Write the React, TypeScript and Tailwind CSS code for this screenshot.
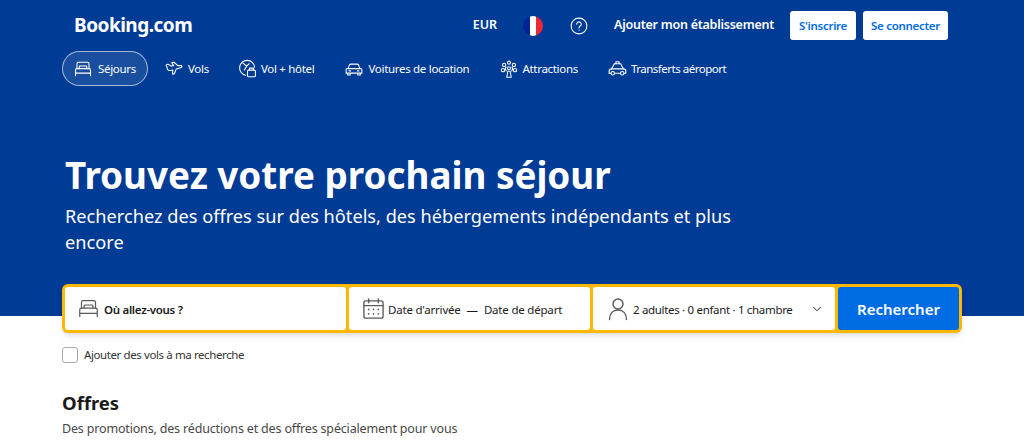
import type { ReactNode } from 'react'
import { ChevronDown } from 'lucide-react'

const FONT = "font-['Noto_Sans','Open_Sans',sans-serif]"

function Ico({ children, className = 'w-[18px] h-[18px]' }: { children: ReactNode; className?: string }) {
  return (
    <svg viewBox="0 0 24 24" fill="none" stroke="currentColor" strokeWidth="1.4" strokeLinecap="round" strokeLinejoin="round" className={`shrink-0 ${className}`}>
      {children}
    </svg>
  )
}

const Bed = ({ className }: { className?: string }) => (
  <Ico className={className}>
    <path d="M2 21v-3.500M22 21v-3.500M2 17.500h20v-4a2 2 0 0 0-2-2H4a2 2 0 0 0-2 2v4Z" />
    <path d="M4 11.500V5a2 2 0 0 1 2-2h12a2 2 0 0 1 2 2v6.500" />
    <path d="M7 11.500V9a1 1 0 0 1 1-1h8a1 1 0 0 1 1 1v2.500" />
  </Ico>
)

const Plane = () => (
  <Ico>
    <path d="M1.500 6.500 4 5.500l4 2.500 3.500-.5L9 3.500l3-.5 5 4.500 3.500-.3c1.500-.1 2.500.8 2 1.800-.4.8-1.500 1.300-3 1.700l-4.500 1.200-2.500 6.500-2.500.5.500-5.500-3.500.5c-1.500.2-3-.3-3.500-1.200L1.500 6.500Z" />
  </Ico>
)

const PlaneHotel = () => (
  <Ico className="w-[19px] h-[19px]">
    <path d="M9.500 20.500A9.500 9.500 0 1 1 21 10.500" />
    <path d="M6 5l5 4-3 5M11 9l3-3" />
    <rect x="12" y="14" width="10" height="8.500" rx="1.500" />
    <path d="M14.500 14v-2.500h5V14" />
  </Ico>
)

const Car = () => (
  <Ico>
    <path d="M4 11.500 6 6.500A2 2 0 0 1 7.800 5.500h8.400a2 2 0 0 1 1.800 1l2 5" />
    <path d="M3 11.500h18a1.500 1.500 0 0 1 1.500 1.500v4.500h-21V13A1.500 1.500 0 0 1 3 11.500ZM3.500 17.500V20h3.500v-2.500M17 17.500V20h3.500v-2.500" />
    <path d="M5.500 14.500h2M16.500 14.500h2" />
  </Ico>
)

const Wheel = () => (
  <Ico>
    <circle cx="12" cy="11" r="2" />
    <path d="M9 23l1.500-8h3L15 23ZM8 9.500c-1 1.500-1 3.500.5 5M16 9.500c1 1.500 1 3.500-.5 5" />
    <circle cx="12" cy="3.500" r="2" />
    <circle cx="5.500" cy="6.500" r="2.200" />
    <circle cx="18.500" cy="6.500" r="2.200" />
    <circle cx="4" cy="13.500" r="2.200" />
    <circle cx="20" cy="13.500" r="2.200" />
  </Ico>
)

const Taxi = () => (
  <Ico className="w-[19px] h-[19px]">
    <path d="M10 6V3.500h4V6" />
    <path d="M1.500 18v-3c0-1.500 1.500-2.500 3-2.500L8 6h8l3.500 6.500c1.500 0 3 1 3 2.500v3h-2" />
    <path d="M4.500 12.500h15M8.500 18h7M1.500 18h2" />
    <circle cx="6" cy="18" r="2.200" />
    <circle cx="18" cy="18" r="2.200" />
  </Ico>
)

const Calendar = () => (
  <Ico className="w-[23px] h-[23px]">
    <rect x="2" y="4" width="20" height="18" rx="2" />
    <path d="M2 9h20M7 2v4M17 2v4" />
    <path d="M7 13h.01M12 13h.01M17 13h.01M7 17.500h.01M12 17.500h.01M17 17.500h.01" strokeWidth="1.800" />
  </Ico>
)

const Person = () => (
  <Ico className="w-[24px] h-[24px]">
    <circle cx="12" cy="7" r="5" />
    <path d="M3.500 22.500c0-6 3.500-9.500 8.500-9.500s8.500 3.500 8.500 9.500" />
  </Ico>
)

const Help = () => (
  <Ico className="w-[18px] h-[18px]">
    <circle cx="12" cy="12" r="10.500" />
    <path d="M9 9.500a3 3 0 1 1 4.500 2.600c-1 .6-1.500 1.200-1.500 2.400M12 17.500h.01" />
  </Ico>
)

const navItems = [
  { label: 'Vols', icon: <Plane />, cls: 'ml-[17px] gap-[5px]' },
  { label: 'Vol + hôtel', icon: <PlaneHotel />, cls: 'ml-[29px] gap-[4px]' },
  { label: 'Voitures de location', icon: <Car />, cls: 'ml-[31px] gap-[5px]' },
  { label: 'Attractions', icon: <Wheel />, cls: 'ml-[31px] gap-[4px]' },
  { label: 'Transferts aéroport', icon: <Taxi />, cls: 'ml-[30px] gap-[4px] tracking-[-0.5px]' },
]

export default function App() {
  return (
    <div className={`${FONT} h-[442px] overflow-hidden bg-white text-[#1a1a1a]`}>
      <div className="h-[316px] bg-[#003b95] text-white">
        <div className="flex h-[51px] items-center pr-[76px] pl-[74px]">
          <span className="text-[19px] font-bold tracking-[-0.5px]">Booking.com</span>
          <span className="ml-auto text-[12.500px] font-semibold">EUR</span>
          <span className="ml-[26px] flex h-5 w-5 overflow-hidden rounded-full">
            <span className="flex-1 bg-[#002395]" />
            <span className="flex-1 bg-white" />
            <span className="flex-1 bg-[#ed2939]" />
          </span>
          <span className="ml-[27px]"><Help /></span>
          <span className="ml-[26px] text-[12.500px] font-semibold tracking-[-0.25px]">Ajouter mon établissement</span>
          <button className="ml-[16px] h-[29px] w-[66px] rounded-[3px] bg-white text-[11.500px] font-semibold tracking-[-0.3px] text-[#006ce4]">S'inscrire</button>
          <button className="ml-[7px] h-[29px] w-[85px] rounded-[3px] bg-white text-[11.500px] font-semibold tracking-[-0.3px] text-[#006ce4]">Se connecter</button>
        </div>
        <nav className="flex h-[35px] items-center pl-[62px] text-[11.500px] tracking-[-0.3px]">
          <a className="flex h-[35px] w-[86px] items-center justify-center gap-[6px] rounded-full border border-white/60 bg-white/10">
            <Bed className="w-[18px] h-[18px]" />
            Séjours
          </a>
          {navItems.map((n) => (
            <a key={n.label} className={`flex items-center ${n.cls}`}>
              {n.icon}
              {n.label}
            </a>
          ))}
        </nav>
        <div className="pt-[61px] pl-[65px]">
          <h1 className="text-[36.800px] leading-[56px] font-bold">Trouvez votre prochain séjour</h1>
          <p className="w-[700px] text-[18.200px] leading-[26px]">Recherchez des offres sur des hôtels, des hébergements indépendants et plus encore</p>
        </div>
      </div>

      <div className="mx-[62px] -mt-[32px] flex h-[49px] w-[900px] gap-[3px] rounded-[6px] bg-[#ffb700] p-[3px] text-[11.500px] tracking-[-0.2px] shadow-md">
        <div className="flex w-[281px] items-center gap-[5px] rounded-[3px] bg-white pl-[13px] font-semibold tracking-[-0.3px]">
          <span className="text-[#595959]"><Bed className="w-[21px] h-[21px]" /></span>
          <span className="pt-[2px]">Où allez-vous ?</span>
        </div>
        <div className="flex w-[241px] items-center rounded-[3px] bg-white pl-[13px]">
          <span className="text-[#595959]"><Calendar /></span>
          <span className="ml-[3px] pt-[2px]">Date d'arrivée</span>
          <span className="mx-[6px] pt-[2px]">—</span>
          <span className="pt-[2px]">Date de départ</span>
        </div>
        <div className="flex w-[242px] items-center rounded-[3px] bg-white pl-[13px]">
          <span className="text-[#595959]"><Person /></span>
          <span className="ml-[3px] pt-[2px] tracking-[-0.32px] whitespace-nowrap">2 adultes · 0 enfant · 1 chambre</span>
          <ChevronDown className="ml-auto mr-[11px] h-[14px] w-[14px]" strokeWidth={1.6} />
        </div>
        <button className="flex-1 rounded-[3px] bg-[#006ce4] pt-[2px] text-[15px] font-semibold tracking-normal text-white">Rechercher</button>
      </div>

      <label className="mt-[14px] ml-[62px] flex items-center gap-[6px] text-[11.500px] leading-[16px] tracking-[-0.4px] text-[#333]">
        <span className="h-4 w-4 rounded-[3px] border border-[#a8a8a8] bg-white" />
        Ajouter des vols à ma recherche
      </label>

      <h2 className="mt-[26px] ml-[62px] text-[18.500px] leading-[28px] font-bold">Offres</h2>
      <p className="mt-[3px] ml-[62px] text-[12.500px] leading-[18px] tracking-[-0.17px] text-[#474747]">Des promotions, des réductions et des offres spécialement pour vous</p>
    </div>
  )
}
